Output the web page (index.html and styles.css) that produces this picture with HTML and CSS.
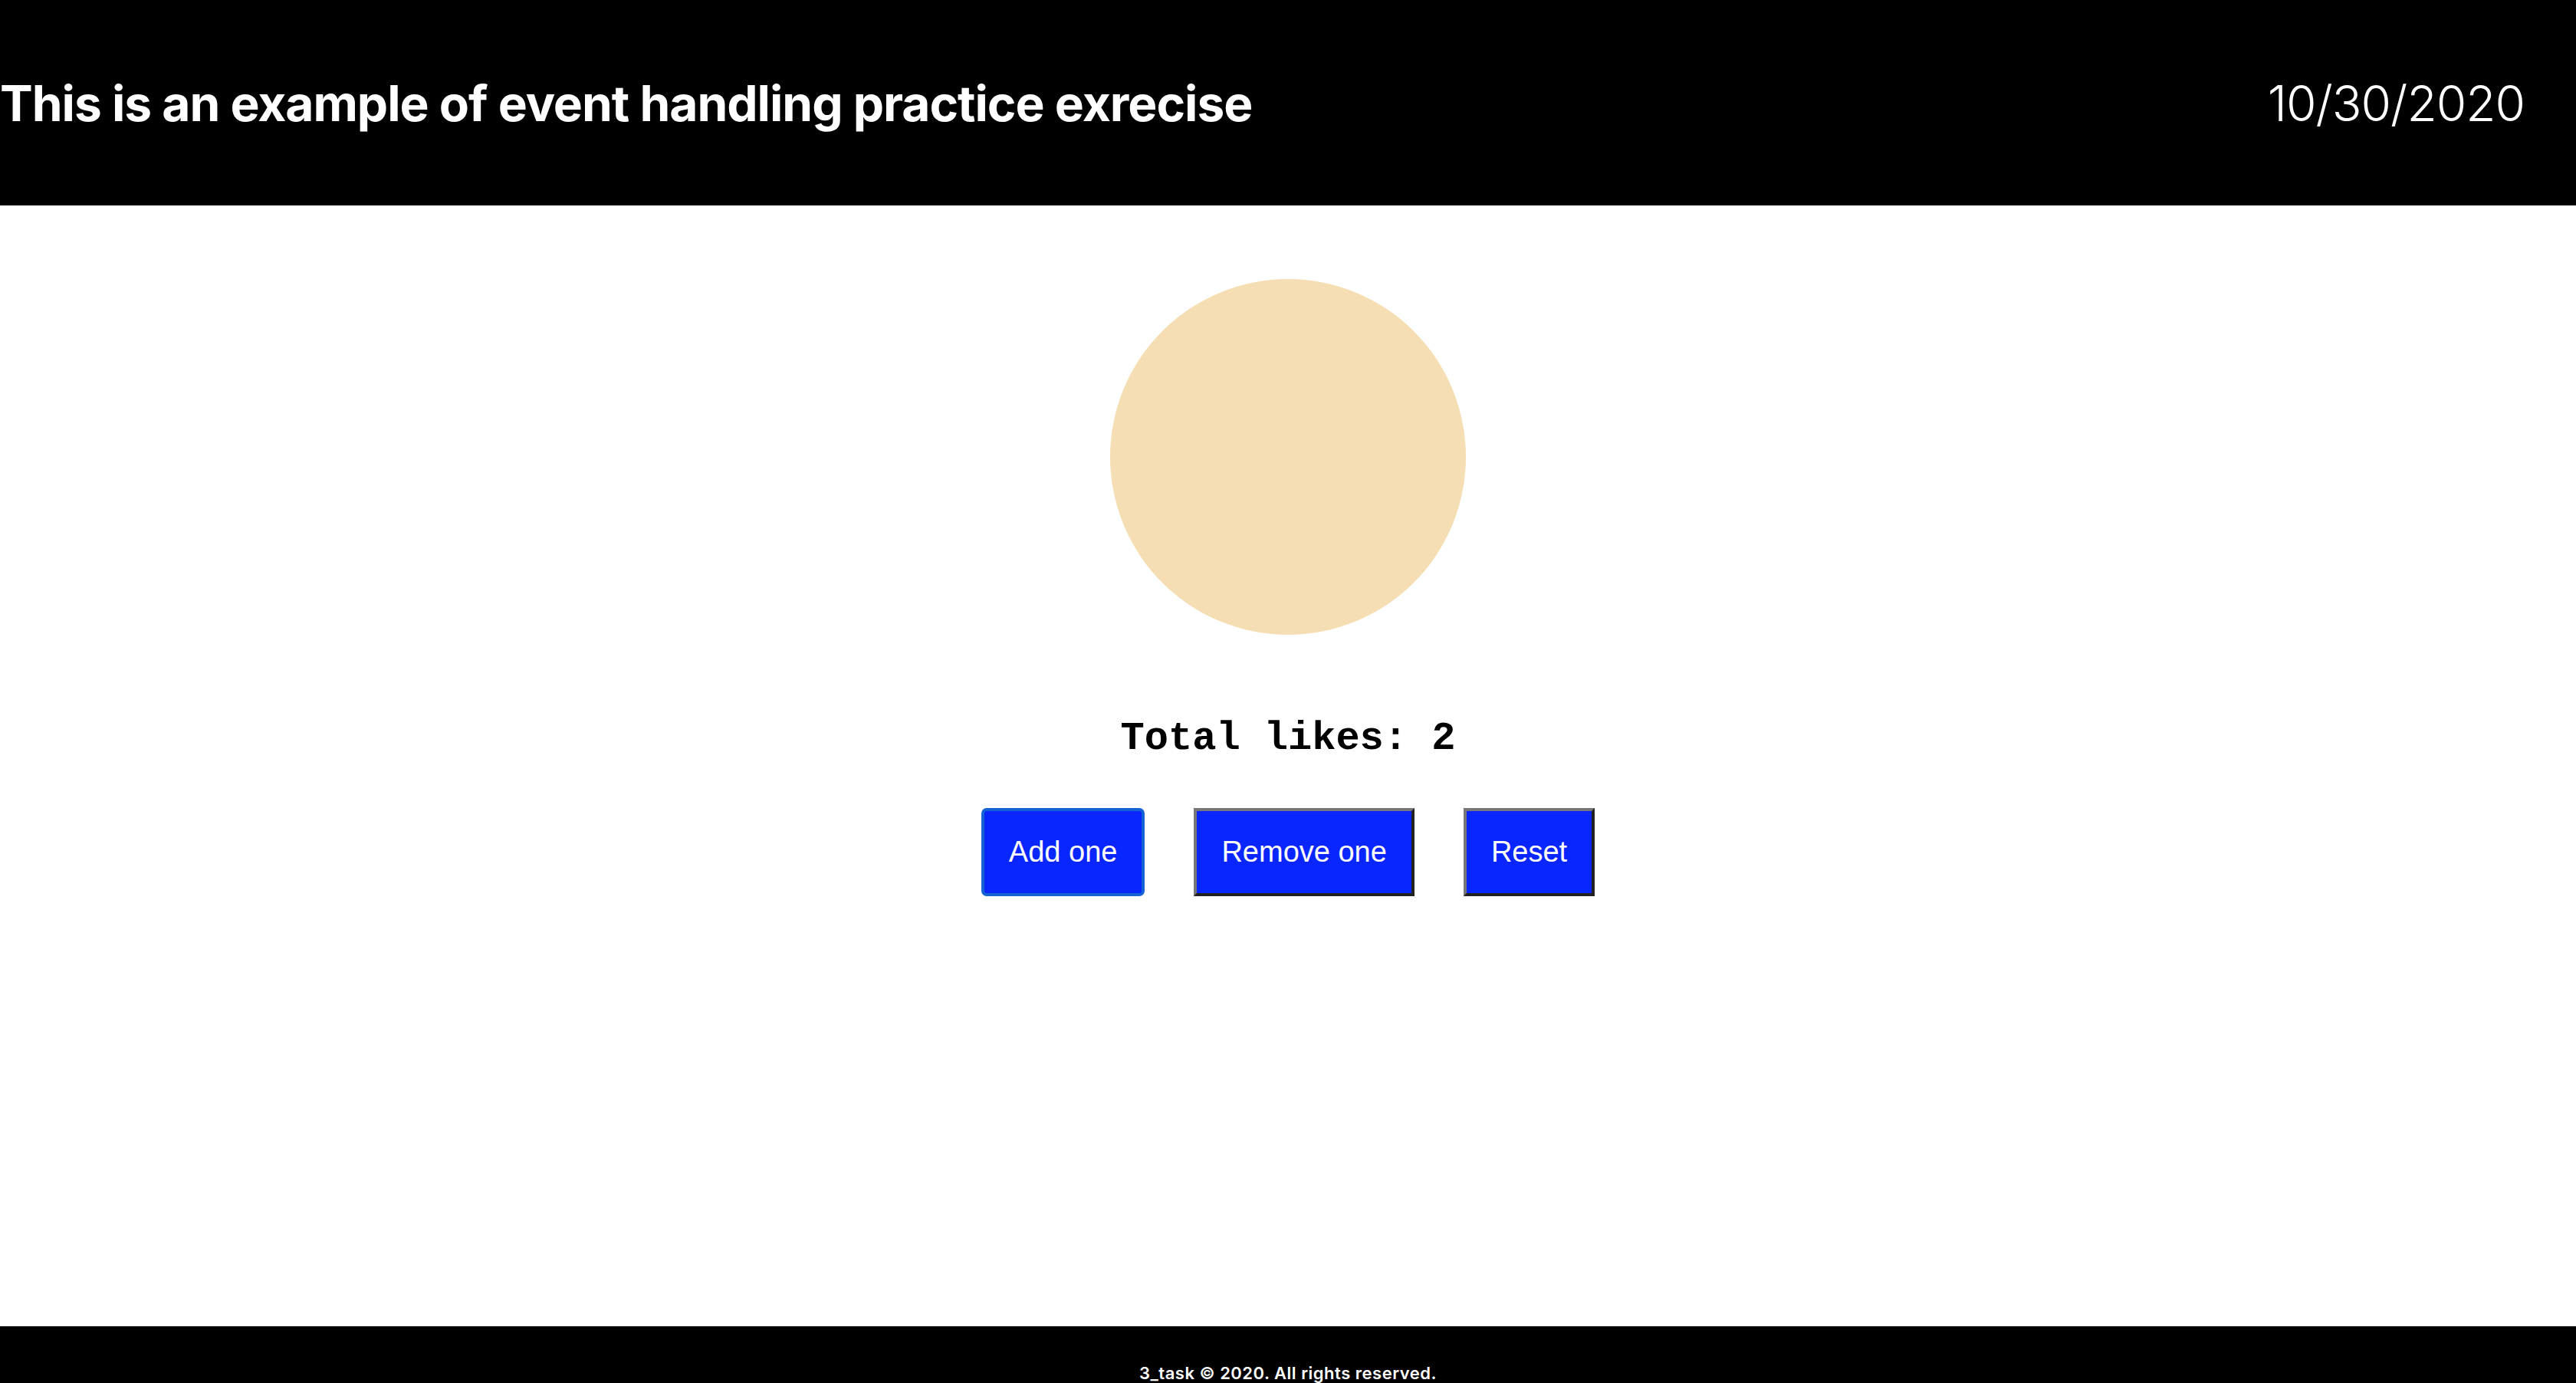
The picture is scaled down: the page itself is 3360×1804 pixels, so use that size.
FILE: index.html
```html
<!DOCTYPE html>
<html lang="en">
<head>
<meta charset="utf-8">
<title>Event handling practice</title>
<link rel="stylesheet" href="styles.css">
</head>
<body>
<header class="topbar">
  <h1 class="title">This is an example of event handling practice exrecise</h1>
  <p class="date">10/30/2020</p>
</header>
<main class="content">
  <div class="circle"></div>
  <h2 class="likes">Total likes: 2</h2>
  <div class="actions">
    <button class="btn btn-focused" type="button">Add one</button>
    <button class="btn" type="button">Remove one</button>
    <button class="btn" type="button">Reset</button>
  </div>
</main>
<footer class="footer">
  <p class="copy">3_task © 2020. All rights reserved.</p>
</footer>
</body>
</html>
```
FILE: styles.css
```css
html, body {
  margin: 0;
  padding: 0;
}
body {
  font-family: Inter, "Noto Sans", sans-serif;
  background: #fff;
  color: #000;
  overflow: hidden;
}
.topbar {
  background: #000;
  color: #fff;
  height: 268px;
  display: flex;
  align-items: center;
  justify-content: space-between;
  padding: 0 67px 0 0;
  box-sizing: border-box;
}
.title {
  margin: 0;
  font-size: 64px;
  font-weight: 700;
  letter-spacing: -1px;
}
.date {
  margin: 0;
  font-size: 64px;
  font-weight: 300;
  letter-spacing: -1px;
}
.content {
  min-height: 1462px;
  box-sizing: border-box;
  padding-top: 96px;
  display: flex;
  flex-direction: column;
  align-items: center;
}
.circle {
  width: 464px;
  height: 464px;
  border-radius: 50%;
  background: #f5deb3;
}
.likes {
  margin: 106px 0 0;
  font-family: "Liberation Mono", "Courier New", monospace;
  font-size: 52px;
  font-weight: 700;
}
.actions {
  margin-top: 61px;
  display: flex;
  gap: 64px;
}
.btn {
  font-family: "Liberation Sans", Arial, sans-serif;
  font-size: 38px;
  line-height: normal;
  color: #fff;
  background: #0a26fe;
  padding: 32px;
  border: 4px solid;
  border-color: #777 #222 #222 #777;
  margin: 0;
}
.btn-focused {
  border: 4px solid #1562d4;
  border-radius: 7px;
}
.footer {
  background: #000;
  color: #fff;
  padding: 48px 0;
  text-align: center;
}
.copy {
  margin: 0;
  font-size: 22px;
  font-weight: 600;
  letter-spacing: 0.5px;
}
```
